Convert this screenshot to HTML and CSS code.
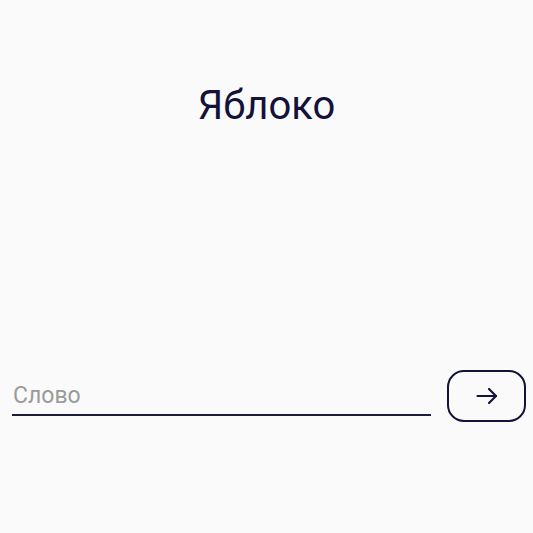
FILE: index.html
```html
<!DOCTYPE html>
<html lang="ru">
<head>
<meta charset="utf-8">
<link rel="stylesheet" href="styles.css">
</head>
<body>
<main class="screen">
  <h1 class="title">Яблоко</h1>
  <form class="row" onsubmit="return false">
    <input class="word" type="text" placeholder="Слово">
    <button class="go" type="submit" aria-label="Далее">
      <svg width="22" height="18" viewBox="0 0 22 18" fill="none" stroke="#12123a" stroke-width="2.2" stroke-linecap="round" stroke-linejoin="round">
        <path d="M1.5 9H20"/>
        <path d="M13 2L20 9L13 16"/>
      </svg>
    </button>
  </form>
</main>
</body>
</html>
```
FILE: styles.css
```css
html, body {
  margin: 0;
  padding: 0;
  background: #fafafa;
}
body {
  font-family: Roboto, "Noto Sans", sans-serif;
  width: 533px;
  height: 533px;
  overflow: hidden;
}
.screen {
  display: flex;
  flex-direction: column;
  padding-top: 82px;
}
.title {
  margin: 0;
  font-size: 40px;
  font-weight: 400;
  line-height: 47px;
  text-align: center;
  color: #12123a;
}
.row {
  display: flex;
  align-items: flex-start;
  gap: 16px;
  margin: 241px 0 0 0;
  padding: 0 7px 0 12px;
}
.word {
  flex: 1;
  margin-top: 7px;
  height: 37px;
  box-sizing: content-box;
  padding: 0 0 0 1px;
  border: 0;
  border-bottom: 2px solid #1c1c3e;
  background: transparent;
  font-family: Roboto, sans-serif;
  font-size: 23px;
  color: #12123a;
  outline: none;
}
.word::placeholder {
  color: #9a9a9a;
}
.go {
  width: 79px;
  height: 52px;
  box-sizing: border-box;
  border: 2px solid #12123a;
  border-radius: 17px;
  background: transparent;
  display: flex;
  align-items: center;
  justify-content: center;
  padding: 0;
}
```
